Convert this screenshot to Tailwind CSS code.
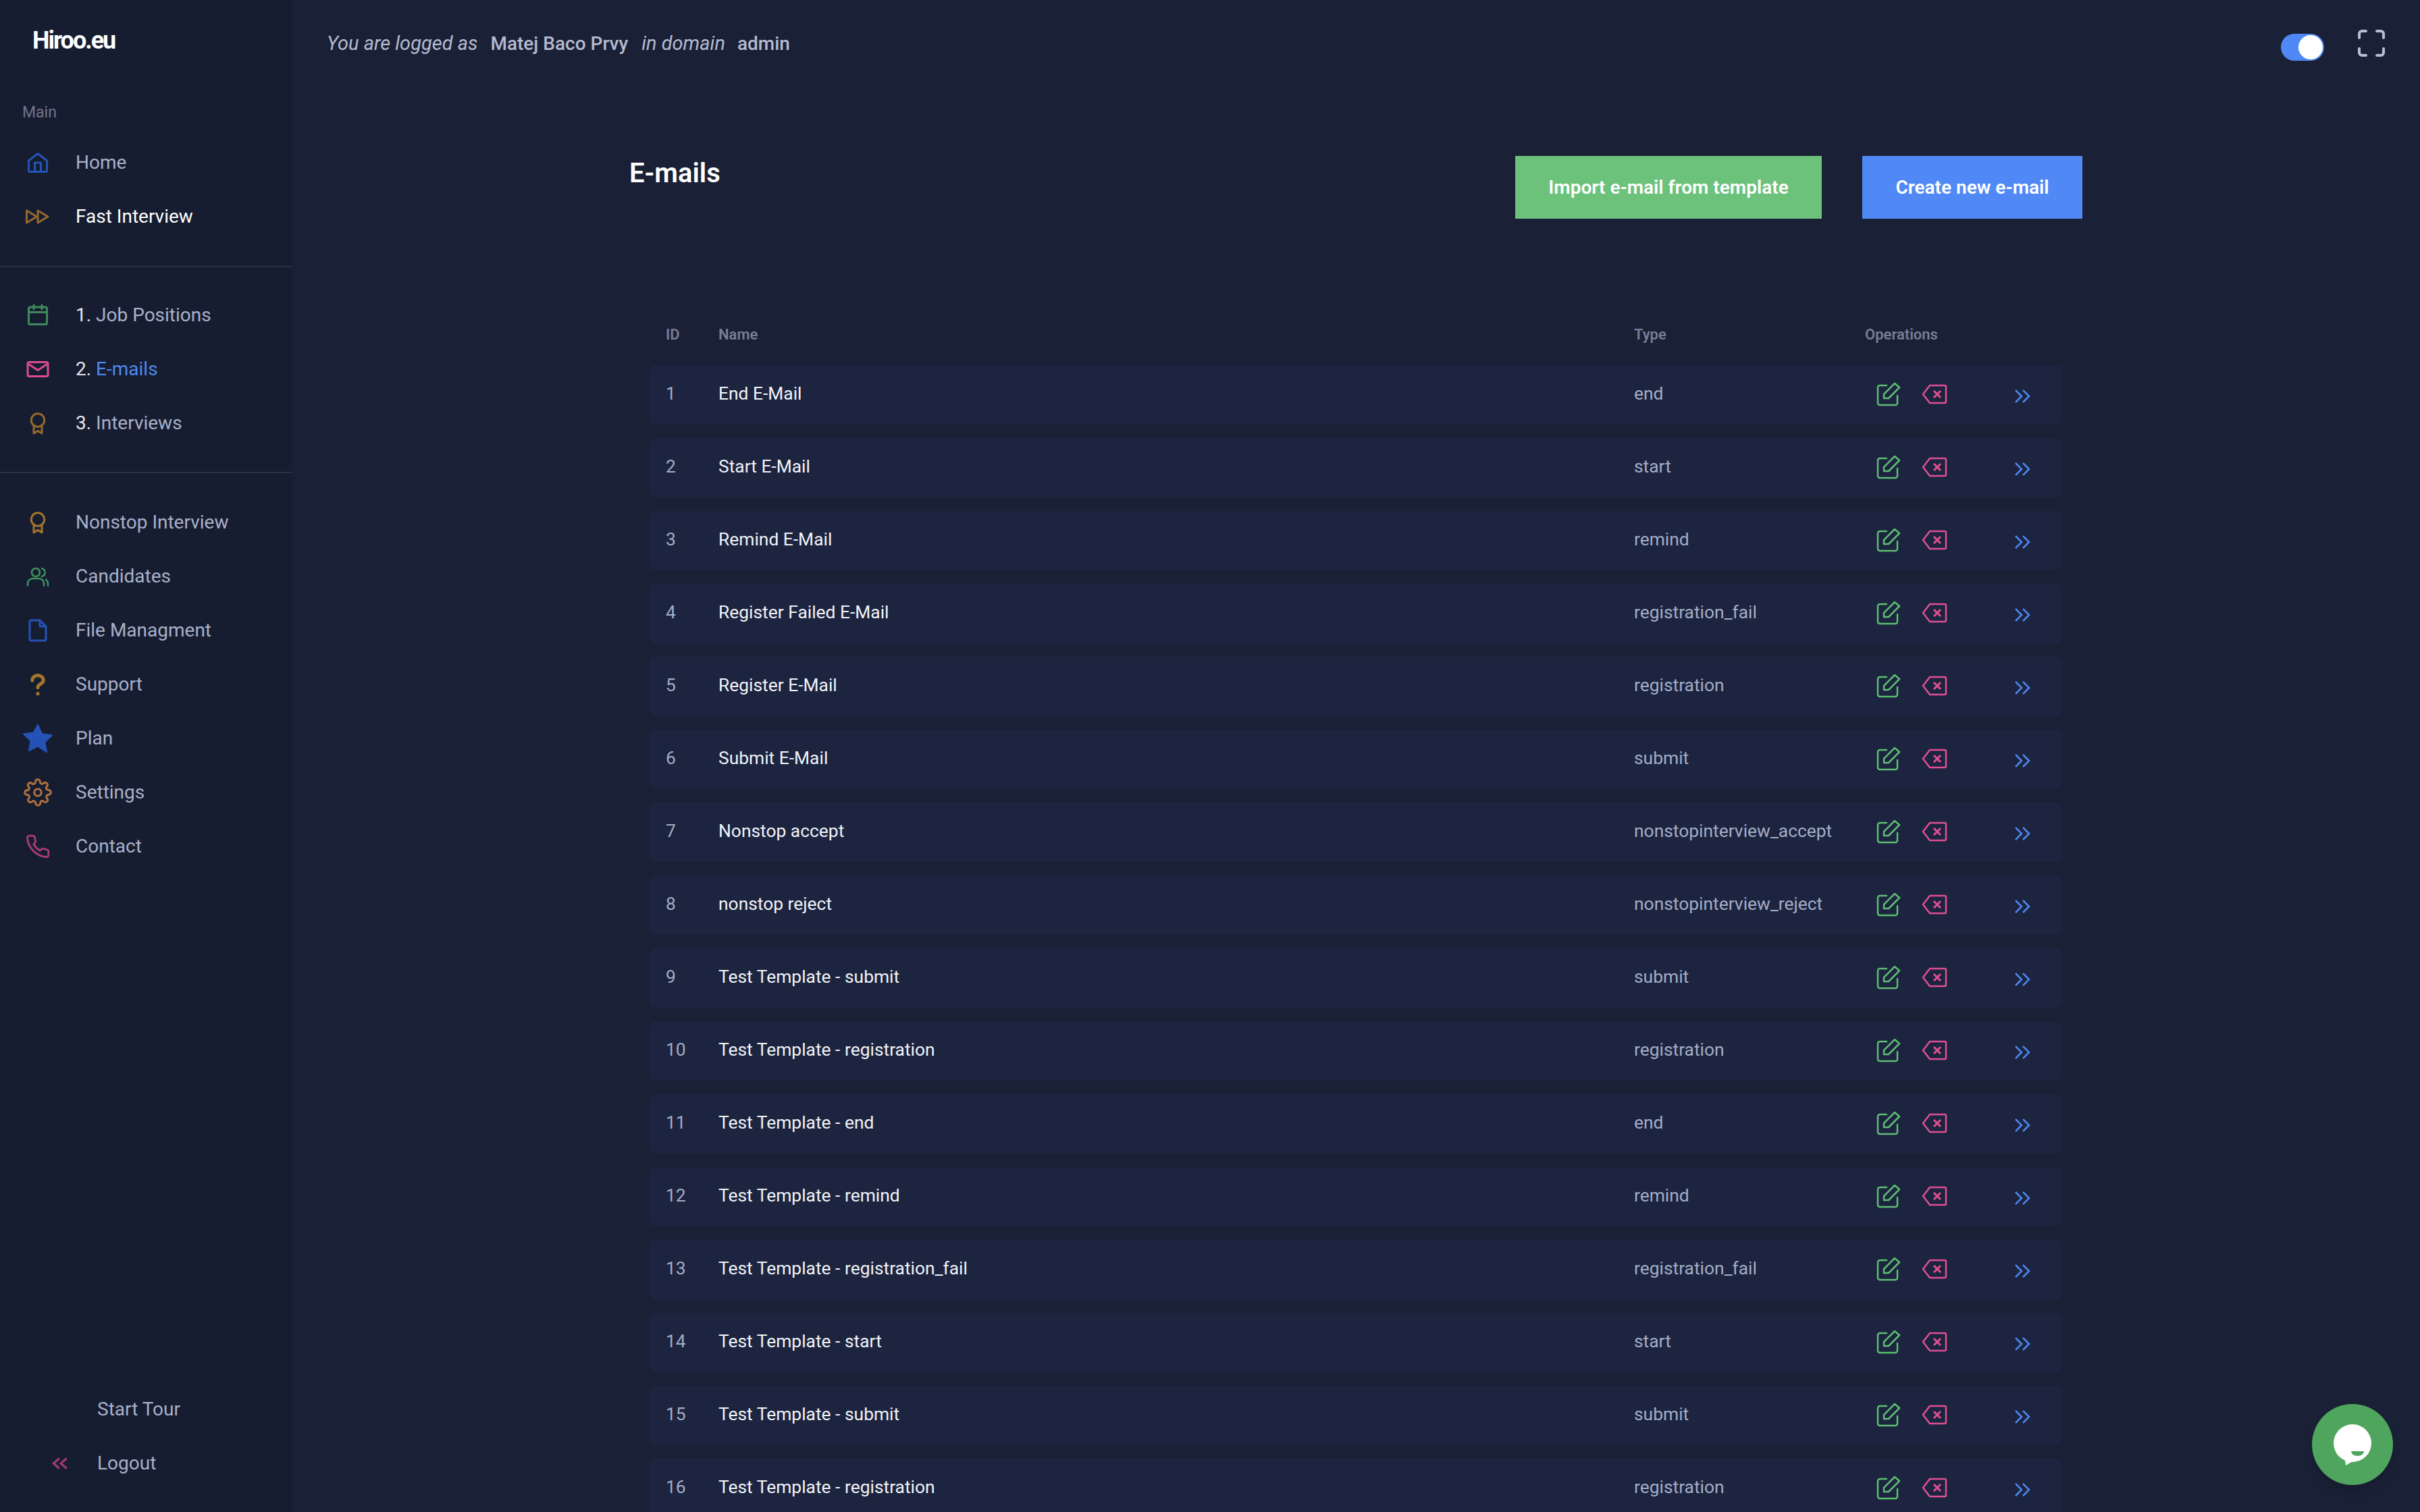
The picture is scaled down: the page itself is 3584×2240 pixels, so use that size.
<!DOCTYPE html>
<html lang="en">
<head>
    <meta charset="UTF-8">
    <title>E-mails</title>
    <script src="https://cdn.jsdelivr.net/npm/@tailwindcss/browser@4"></script>
</head>
<body class="bg-[#1a2035] font-['Roboto',sans-serif] h-screen overflow-hidden">
<div class="flex h-[2240px] overflow-hidden">
    <!-- Sidebar -->
    <aside class="w-[432px] shrink-0 bg-[#161d30] flex flex-col text-[28px] text-[#a9b0c9]">
        <div class="h-[120px] pl-[48px] flex items-center text-[36px] font-bold tracking-[-2px] text-white">Hiroo.eu</div>
        <div class="pl-[33px] text-[23px] leading-[20px] text-[#6f7690] mt-[37px]">Main</div>
        <nav class="mt-[24px] flex flex-col">
            <a class="h-[80px] flex items-center"><span class="w-[112px] flex justify-center"><svg class="w-[36px] h-[36px]" viewBox="0 0 24 24" fill="none" stroke="#2553b5" stroke-width="2" stroke-linejoin="round"><path d="M3 10l9-7 9 7v10a1 1 0 0 1-1 1H4a1 1 0 0 1-1-1z"/><path d="M9 21v-9h6v9"/></svg></span>Home</a>
            <a class="h-[80px] flex items-center text-white"><span class="w-[112px] flex justify-center"><svg class="w-[36px] h-[36px]" viewBox="0 0 24 24" fill="none" stroke="#94682c" stroke-width="2" stroke-linejoin="round"><path d="M1 6v12l10-6z"/><path d="M12 6v12l10-6z"/></svg></span>Fast Interview</a>
        </nav>
        <div class="mt-[33px] border-t-2 border-[#2a3145]"></div>
        <nav class="mt-[31px] flex flex-col">
            <a class="h-[80px] flex items-center"><span class="w-[112px] flex justify-center"><svg class="w-[36px] h-[36px]" viewBox="0 0 24 24" fill="none" stroke="#3f8a5c" stroke-width="2" stroke-linecap="round" stroke-linejoin="round"><rect x="3" y="4" width="18" height="17" rx="1.5"/><path d="M8 2v4M16 2v4M3 9h18"/></svg></span><span><span class="text-[#e6e8f0]">1.</span> Job Positions</span></a>
            <a class="h-[80px] flex items-center"><span class="w-[112px] flex justify-center"><svg class="w-[36px] h-[36px]" viewBox="0 0 24 24" fill="none" stroke="#de4a8e" stroke-width="2" stroke-linejoin="round"><rect x="2" y="5" width="20" height="14" rx="1.5"/><path d="M3 7l9 6 9-6"/></svg></span><span><span class="text-[#e6e8f0]">2.</span> <span class="text-[#4f88ee]">E-mails</span></span></a>
            <a class="h-[80px] flex items-center"><span class="w-[112px] flex justify-center"><svg class="w-[36px] h-[36px]" viewBox="0 0 24 24" fill="none" stroke="#94682c" stroke-width="2" stroke-linejoin="round"><circle cx="12" cy="9" r="6.5"/><path d="M8 14.5V22l4-2.5 4 2.5v-7.500"/></svg></span><span><span class="text-[#e6e8f0]">3.</span> Interviews</span></a>
        </nav>
        <div class="mt-[32px] border-t-2 border-[#2a3145]"></div>
        <nav class="mt-[33px] flex flex-col">
            <a class="h-[80px] flex items-center"><span class="w-[112px] flex justify-center"><svg class="w-[36px] h-[36px]" viewBox="0 0 24 24" fill="none" stroke="#a3752c" stroke-width="2" stroke-linejoin="round"><circle cx="12" cy="9" r="6.500"/><path d="M8 14.500V22l4-2.500 4 2.500v-7.500"/></svg></span>Nonstop Interview</a>
            <a class="h-[80px] flex items-center"><span class="w-[112px] flex justify-center"><svg class="w-[36px] h-[36px]" viewBox="0 0 24 24" fill="none" stroke="#3f9060" stroke-width="1.700" stroke-linecap="round" stroke-linejoin="round"><circle cx="10" cy="8" r="4"/><path d="M2 21v-2a5 5 0 0 1 5-5h6a5 5 0 0 1 5 5v2"/><path d="M16 4.100a4 4 0 0 1 0 7.800M22 21v-2a5 5 0 0 0-2-3.900"/></svg></span>Candidates</a>
            <a class="h-[80px] flex items-center"><span class="w-[112px] flex justify-center"><svg class="w-[36px] h-[36px]" viewBox="0 0 24 24" fill="none" stroke="#2553b5" stroke-width="2" stroke-linejoin="round"><path d="M14 2H5.500A1.500 1.500 0 0 0 4 3.500v17A1.500 1.500 0 0 0 5.500 22h13a1.500 1.500 0 0 0 1.500-1.500V8z"/><path d="M14 2v6h6"/></svg></span>File Managment</a>
            <a class="h-[80px] flex items-center"><span class="w-[112px] flex justify-center"><svg class="w-[36px] h-[36px]" viewBox="0 0 24 24" fill="none" stroke="#a3752c" stroke-width="3.400" stroke-linecap="round"><path d="M6.500 8a5.500 5 0 0 1 11 0c0 3.500-5.500 3.500-5.500 7"/><path d="M12 21v.1"/></svg></span>Support</a>
            <a class="h-[80px] flex items-center"><span class="w-[112px] flex justify-center"><svg class="w-[46px] h-[46px]" viewBox="0 0 24 24" fill="#2553b5" stroke="#2553b5" stroke-width="1" stroke-linejoin="round"><path d="M12 1.500l3.300 7 7.700 1-5.600 5.300 1.500 7.700L12 18l-6.900 3.500 1.500-7.700L1 8.500l7.700-1z"/></svg></span>Plan</a>
            <a class="h-[80px] flex items-center"><span class="w-[112px] flex justify-center"><svg class="w-[42px] h-[42px]" viewBox="0 0 24 24" fill="none" stroke="#a96f3e" stroke-width="1.800" stroke-linecap="round" stroke-linejoin="round"><circle cx="12" cy="12" r="3"/><path d="M19.400 15a1.650 1.650 0 0 0 .33 1.820l.06.06a2 2 0 1 1-2.830 2.830l-.06-.06a1.650 1.650 0 0 0-2.800 1.170V21a2 2 0 1 1-4 0v-.09A1.650 1.650 0 0 0 7.270 19.700l-.06.06a2 2 0 1 1-2.830-2.830l.06-.06a1.650 1.650 0 0 0-1.170-2.800H3a2 2 0 1 1 0-4h.09A1.650 1.650 0 0 0 4.300 7.270l-.06-.06a2 2 0 1 1 2.830-2.830l.06.06A1.650 1.650 0 0 0 9.930 3.270V3a2 2 0 1 1 4 0v.09a1.650 1.650 0 0 0 2.800 1.170l.06-.06a2 2 0 1 1 2.830 2.830l-.06.06a1.650 1.650 0 0 0 1.170 2.800H21a2 2 0 1 1 0 4h-.09a1.650 1.650 0 0 0-1.510 1z"/></svg></span>Settings</a>
            <a class="h-[80px] flex items-center"><span class="w-[112px] flex justify-center"><svg class="w-[38px] h-[38px]" viewBox="0 0 24 24" fill="none" stroke="#a63c78" stroke-width="1.800" stroke-linejoin="round"><path d="M22 16.900v3a2 2 0 0 1-2.200 2 19.800 19.800 0 0 1-8.600-3 19.500 19.500 0 0 1-6-6 19.800 19.800 0 0 1-3-8.700A2 2 0 0 1 4.100 2h3a2 2 0 0 1 2 1.700c.1 1 .4 1.900.7 2.800a2 2 0 0 1-.5 2.100L8.100 9.900a16 16 0 0 0 6 6l1.300-1.300a2 2 0 0 1 2.100-.4c.9.300 1.800.6 2.800.7a2 2 0 0 1 1.700 2z"/></svg></span>Contact</a>
        </nav>
        <div class="mt-auto pb-[32px] flex flex-col">
            <a class="h-[80px] pl-[144px] flex items-center">Start Tour</a>
            <a class="h-[80px] flex items-center"><span class="w-[144px] pl-[76px] flex"><svg class="w-[26px] h-[26px]" viewBox="0 0 24 24" fill="none" stroke="#9c3a72" stroke-width="3"><path d="M11 5l-8 7 8 7M21 5l-8 7 8 7"/></svg></span>Logout</a>
        </div>
    </aside>

    <!-- Main -->
    <main class="flex-1 min-w-0 relative">
        <header class="h-[128px] pl-[52px] pr-[52px] flex items-center text-[28px] text-[#b4bad0]">
            <span class="italic text-[29px] mt-[1px]">You are logged as</span>
            <span class="ml-[19px] font-medium mt-[1px]">Matej Baco Prvy</span>
            <span class="ml-[20px] italic text-[29px] mt-[1px]">in domain</span>
            <span class="ml-[18px] font-medium mt-[1px]">admin</span>
            <div class="ml-auto flex items-center gap-[50px]">
                <div class="w-[64px] h-[40px] mt-[12px] rounded-full bg-[#5089f5] flex items-center justify-end pr-[2px]"><div class="w-[36px] h-[36px] rounded-full bg-white"></div></div>
                <svg class="w-[40px] h-[40px]" viewBox="0 0 40 40" fill="none" stroke="#b9bfd3" stroke-width="4" stroke-linecap="round" stroke-linejoin="round"><path d="M2 12V6a4 4 0 0 1 4-4h6M28 2h6a4 4 0 0 1 4 4v6M38 28v6a4 4 0 0 1-4 4h-6M12 38H6a4 4 0 0 1-4-4v-6"/></svg>
            </div>
        </header>
        <div class="ml-[500px] w-[2152px] mt-[103px] flex items-start">
            <h1 class="text-[40px] leading-[50px] font-semibold text-white mt-[1px]">E-mails</h1>
            <button class="ml-auto w-[454px] h-[93px] bg-[#6cc17b] text-white text-[28px] font-semibold">Import e-mail from template</button>
            <button class="ml-[60px] w-[326px] h-[93px] bg-[#5089f5] text-white text-[28px] font-semibold">Create new e-mail</button>
        </div>
        <div class="ml-[530px] w-[2091px] mt-[156px]">
            <div class="flex h-[30px] items-center pl-[24px] text-[22px] font-semibold text-[#787e97]">
                <div class="w-[78px]">ID</div>
                <div class="w-[1356px]">Name</div>
                <div class="w-[342px]">Type</div>
                <div>Operations</div>
            </div>
            <div id="rows" class="mt-[31px] flex flex-col gap-[20px]"></div>
        </div>
        <!-- Chat bubble -->
        <div class="absolute left-[2992px] top-[2080px] w-[120px] h-[120px] rounded-full bg-[#4fa55d] shadow-lg">
            <svg class="w-[120px] h-[120px]" viewBox="0 0 120 120"><circle cx="60" cy="58" r="28" fill="#fff"/><path d="M50 91l-1-8 16-6 12-2z" fill="#fff"/><path d="M58 70h19a9.500 7 0 0 1-19 0z" fill="#4fa55d"/></svg>
        </div>
    </main>
</div>
<script>
    const rows = [
        ['End E-Mail', 'end'], ['Start E-Mail', 'start'], ['Remind E-Mail', 'remind'],
        ['Register Failed E-Mail', 'registration_fail'], ['Register E-Mail', 'registration'],
        ['Submit E-Mail', 'submit'], ['Nonstop accept', 'nonstopinterview_accept'],
        ['nonstop reject', 'nonstopinterview_reject'], ['Test Template - submit', 'submit'],
        ['Test Template - registration', 'registration'], ['Test Template - end', 'end'],
        ['Test Template - remind', 'remind'], ['Test Template - registration_fail', 'registration_fail'],
        ['Test Template - start', 'start'], ['Test Template - submit', 'submit'],
        ['Test Template - registration', 'registration'],
    ];
    document.getElementById('rows').innerHTML = rows.map((row, i) => `
        <div class="h-[88px] shrink-0 rounded-lg bg-[#1c2440] flex items-center pl-[24px] text-[26.4px] text-[#f2f3f7]">
            <div class="w-[78px] mb-[3px] text-[#a5adc6]">${i + 1}</div>
            <div class="w-[1356px] mb-[3px]">${row[0]}</div>
            <div class="w-[359px] mb-[3px] text-[#a5adc6]">${row[1]}</div>
            <svg class="w-[36px] h-[36px] mt-[-2px]" viewBox="0 0 36 36" fill="none" stroke="#5fbd73" stroke-width="2.500" stroke-linejoin="round" stroke-linecap="round"><path d="M15 5H5a3 3 0 0 0-3 3v23a3 3 0 0 0 3 3h23a3 3 0 0 0 3-3V20"/><path d="M11 18L27 2l7 6-16 16h-7z"/></svg>
            <svg class="ml-[31px] w-[38px] h-[30px] mt-[-2px]" viewBox="0 0 38 30" fill="none" stroke="#e0508f" stroke-width="2.500" stroke-linejoin="round"><path d="M12 2h22a2 2 0 0 1 2 2v22a2 2 0 0 1-2 2H12L2 15z"/><path stroke-width="3" d="M18 10l10 10M28 10L18 20"/></svg>
            <svg class="ml-[99px] w-[24px] h-[24px] mt-[3px]" viewBox="0 0 24 24" fill="none" stroke="#4f88ee" stroke-width="2.500"><path d="M2 3l9 9-9 9M13 3l9 9-9 9"/></svg>
        </div>`).join('');
</script>
</body>
</html>
